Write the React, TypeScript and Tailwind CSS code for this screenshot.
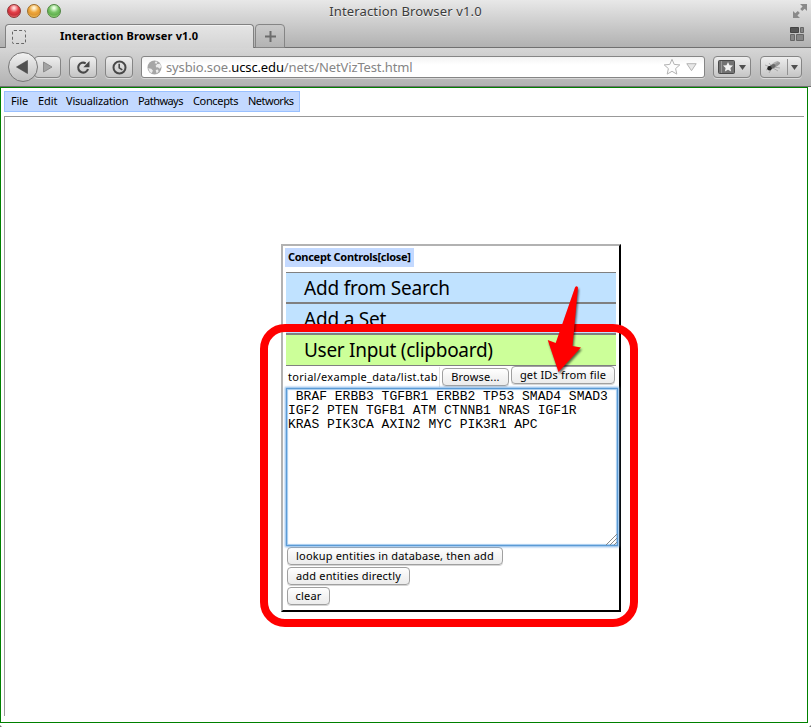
import type { ReactNode } from "react";

function TitleBar() {
  return (
    <div className="relative flex h-6 items-center justify-center pb-px">
      <div className="absolute left-[7px] top-[4px] flex gap-[6px]">
        <span className="size-[14px] rounded-full border border-[#8d3434] bg-[radial-gradient(circle_at_50%_25%,#ffd5d5_8%,#e5404a_42%,#c9303a_65%,#ff9595_100%)]" />
        <span className="size-[14px] rounded-full border border-[#a16d25] bg-[radial-gradient(circle_at_50%_25%,#fff3d2_8%,#efa83d_42%,#df9632_65%,#ffe37c_100%)]" />
        <span className="size-[14px] rounded-full border border-[#4e8541] bg-[radial-gradient(circle_at_50%_25%,#e9ffe0_8%,#79c468_42%,#62b04f_65%,#bdf39d_100%)]" />
      </div>
      <span className="text-[13px] tracking-[0.15px] text-[#3c3c3c] [text-shadow:0_1px_0_#f4f4f4]">Interaction Browser v1.0</span>
      <svg className="absolute right-[3px] top-[4px]" width="15" height="14" viewBox="0 0 15 14" fill="#8a8a8a">
        <path d="M7 0h7v7l-2.3-2.3-2.5 2.4-2-2 2.4-2.5zM0 14V7l2.3 2.3 2.5-2.4 2 2-2.4 2.5L7 14z" />
      </svg>
    </div>
  );
}

function TabStrip() {
  return (
    <div className="relative flex h-6 items-stretch">
      <div className="absolute inset-x-0 bottom-0 h-px bg-[#707070]" />
      <div className="relative ml-[5px] flex w-[249px] items-center rounded-t-[4px] border-x border-t border-[#818181] bg-linear-to-b from-[#e5e5e5] to-[#d4d4d4] pl-[6px] shadow-[inset_0_1px_0_#f2f2f2]">
        <span className="size-[14px] rounded-[2px] border border-dashed border-[#666]" />
        <span className="ml-[34px] whitespace-nowrap text-[11px] font-bold tracking-[0.15px] text-black">Interaction Browser v1.0</span>
      </div>
      <div className="relative ml-px flex w-[30px] items-center justify-center rounded-t-[4px] border border-[#858585] bg-linear-to-b from-[#cacaca] to-[#b3b3b3]">
        <svg width="11" height="11" viewBox="0 0 11 11" stroke="#6c6c6c" strokeWidth="2"><path d="M5.5 0v11M0 5.5h11" /></svg>
      </div>
      <svg className="absolute right-[7px] top-[3px]" width="14" height="14" viewBox="0 0 14 14">
        <path d="M.5.5h8v5h-8z" fill="#555" stroke="#444" />
        <path d="M10.5.5h3v5h-3zM.5 7.5h4v6h-4zM6.5 7.5h7v6h-7z" fill="#858585" stroke="#666" />
      </svg>
    </div>
  );
}

function ToolButton({ className, children }: { className: string; children: ReactNode }) {
  return (
    <div className={`flex h-[22px] items-center justify-center rounded-[4px] border border-[#858585] bg-linear-to-b from-[#eee] to-[#c5c5c5] shadow-[0_1px_0_#dadada] ${className}`}>
      {children}
    </div>
  );
}

function Toolbar() {
  return (
    <div className="flex h-[39px] items-center border-b border-[#707070] bg-linear-to-b from-[#d6d6d6] to-[#b2b2b2]">
      <div className="ml-2 flex items-center">
        <div className="z-10 flex size-[30px] items-center justify-center rounded-full border border-[#777] bg-linear-to-b from-[#f2f2f2] to-[#bebebe] pr-[3px]">
          <svg width="12" height="14" viewBox="0 0 12 14"><path d="M11.5 .5v13L.5 7z" fill="#505050" stroke="#444" strokeWidth=".6" /></svg>
        </div>
        <ToolButton className="-ml-[4px] w-[27px]">
          <svg width="10" height="12" viewBox="0 0 10 12"><path d="M.5 1v10L9 6z" fill="#a3a3a3" stroke="#8b8b8b" /></svg>
        </ToolButton>
      </div>
      <ToolButton className="ml-2 w-[28px]">
        <svg width="15" height="15" viewBox="0 0 15 15"><path d="M9.7 3.3A5 5 0 1 0 12 9" fill="none" stroke="#484848" strokeWidth="2.1" /><path d="M13.5 1v6.2H7.3z" fill="#484848" /></svg>
      </ToolButton>
      <ToolButton className="ml-2 w-[28px]">
        <svg width="15" height="15" viewBox="0 0 15 15" fill="none" stroke="#484848"><circle cx="7.5" cy="7.5" r="6" strokeWidth="2" /><path d="M7.2 3.8v4.1l3.1 2" strokeWidth="1.6" /></svg>
      </ToolButton>
      <div className="relative ml-2 flex h-[22px] w-[564px] items-center rounded-[3px] border border-[#858585] bg-linear-to-b from-[#f3f3f3] to-white to-40% pl-[5px] shadow-[0_1px_0_#d8d8d8]">
        <svg className="shrink-0" width="15" height="15" viewBox="0 0 15 15">
          <circle cx="7.5" cy="7.5" r="7" fill="#a6a6a6" />
          <path d="M8.5 1.5l2 .2-.8 2-2-.5zM10.2 4l3-.2 1 3-1.4 2-2-1.5-1.4.2-.8-1.7zM1.2 8.2l3 .5 1.7 1.8-1 2.6-2-.8zM8.7 10l2.3-.4.6 2-2 1.8z" fill="#ececec" />
        </svg>
        <span className="ml-[4px] mt-px whitespace-nowrap text-[13px] tracking-[-0.13px] text-[#858585]">
          sysbio.soe.<span className="text-black">ucsc.edu</span>/nets/NetVizTest.html
        </span>
        <svg className="absolute right-[23px] top-[1px]" width="18" height="18" viewBox="0 0 18 18"><path d="M9 1.3l2.2 5.1 5.6.5-4.2 3.7 1.2 5.5L9 13.3l-4.8 2.8 1.2-5.5L1.2 6.9l5.6-.5z" fill="#fdfdfd" stroke="#b3b3b3" /></svg>
        <svg className="absolute right-[7px] top-[6px]" width="11" height="9" viewBox="0 0 11 9"><path d="M.8.7h9.4l-4.7 7z" fill="#e8e8e8" stroke="#b3b3b3" /></svg>
      </div>
      <ToolButton className="ml-2 w-[38px] gap-[4px]">
        <svg width="17" height="14" viewBox="0 0 17 14"><rect x=".5" y=".5" width="16" height="13" rx="1" fill="#727272" stroke="#4a4a4a" /><path d="M3.5 1v12" stroke="#9a9a9a" /><path d="M10 2l1.5 3.2 3.5.4-2.6 2.4.7 3.5L10 9.8l-3.1 1.7.7-3.5L5 5.6l3.5-.4z" fill="#f2f2f2" /></svg>
        <svg width="7" height="5" viewBox="0 0 7 5"><path d="M0 0h7L3.5 5z" fill="#4f4f4f" /></svg>
      </ToolButton>
      <ToolButton className="ml-[9px] w-[42px]">
        <svg width="18" height="14" viewBox="0 0 18 14">
          <path d="M1 5l5 2M2 10l5-2M5 13l3-5M8 7L5 3M9 8l5 3M9 7l7 1" stroke="#969696" strokeWidth=".7" />
          <ellipse cx="11" cy="4" rx="4.5" ry="1.8" transform="rotate(-35 11 4)" fill="#b0b0b0" />
          <ellipse cx="13" cy="4.5" rx="3.6" ry="1.4" transform="rotate(-35 13 4.5)" fill="#969696" />
          <ellipse cx="8.5" cy="6.5" rx="3.2" ry="2" transform="rotate(-30 8.5 6.5)" fill="#6a6a6a" />
          <circle cx="5.5" cy="8.2" r="2.2" fill="#222" />
        </svg>
        <span className="ml-[5px] mr-[3px] h-4 w-px bg-[#929292]" />
        <svg width="7" height="5" viewBox="0 0 7 5"><path d="M0 0h7L3.5 5z" fill="#4f4f4f" /></svg>
      </ToolButton>
    </div>
  );
}

function PushButton({ className, children }: { className: string; children: ReactNode }) {
  return (
    <button className={`flex h-[18px] shrink-0 items-center justify-center whitespace-nowrap rounded-[4px] border border-[#a0a0a0] bg-linear-to-b from-white via-[#f4f4f4] via-50% to-[#ececec] text-[11px] tracking-[0.17px] text-black shadow-[0_1px_0_#d5d5d5] ${className}`}>
      {children}
    </button>
  );
}

function ConceptControls() {
  return (
    <section className="absolute left-[281px] top-[244px] h-[368px] w-[340px] border-2 border-b-black border-l-[#b2b2b2] border-r-black border-t-[#b2b2b2] bg-white">
      <div className="ml-[2px] mt-[2px] flex h-[19px] w-[129px] items-center whitespace-nowrap bg-[#c3d9ff] pl-[3px] text-[11px] font-bold tracking-[-0.29px]">
        Concept Controls[close]
      </div>
      <div className="ml-[3px] mt-[5px] w-[330px] text-[19px] leading-[29px]">
        <div className="h-[32px] border-b-2 border-t border-[#808080] bg-[#c0e2ff] pl-[18px] tracking-[-0.2px]">
          <div className="pt-[1px]">Add from Search</div>
        </div>
        <div className="h-[31px] border-b-2 border-[#808080] bg-[#c0e2ff] pl-[18px] tracking-[-0.2px]">
          <div className="pt-[1px]">Add a Set</div>
        </div>
        <div className="h-[31px] border-b border-[#808080] bg-[#ccff99] pl-[18px] tracking-[-0.28px]">
          <div className="pt-[1px]">User Input (clipboard)</div>
        </div>
      </div>
      <div className="flex h-[22px] pl-[3px] text-[11px]">
        <div className="mt-px flex h-[20px] w-[154px] items-center overflow-hidden whitespace-nowrap border-r border-[#e0e0e0] pl-[2px] tracking-[0.28px]">torial/example_data/list.tab</div>
        <PushButton className="ml-[2px] mt-[2px] w-[67px]">Browse...</PushButton>
        <PushButton className="ml-[2px] w-[104px]">get IDs from file</PushButton>
      </div>
      <div className="relative ml-[3px] h-[158px] w-[332px] whitespace-pre border border-[#5b9bd5] bg-white pl-px pt-[1px] font-['Liberation_Mono','Courier_New',monospace] text-[13px] leading-[14px] shadow-[0_0_2px_1px_#82b5e8,inset_0_0_1px_1px_#a3caef]">
        {" BRAF ERBB3 TGFBR1 ERBB2 TP53 SMAD4 SMAD3\nIGF2 PTEN TGFB1 ATM CTNNB1 NRAS IGF1R\nKRAS PIK3CA AXIN2 MYC PIK3R1 APC"}
        <svg className="absolute bottom-0 right-0" width="12" height="12" viewBox="0 0 12 12" stroke="#888"><path d="M1 12L12 1M5 12l7-7M9 12l3-3" /></svg>
      </div>
      <div className="ml-[4px] mt-[1px] flex flex-col gap-[2px]">
        <PushButton className="w-[216px]">lookup entities in database, then add</PushButton>
        <PushButton className="w-[123px]">add entities directly</PushButton>
        <PushButton className="w-[43px]">clear</PushButton>
      </div>
    </section>
  );
}

function Callout() {
  return (
    <>
      <div className="pointer-events-none absolute left-[260px] top-[324px] h-[303px] w-[378px] rounded-[25px] border-8 border-[#ff0000]" />
      <svg className="pointer-events-none absolute left-[540px] top-[280px] drop-shadow-[1px_2px_1px_rgba(0,0,0,0.6)]" width="50" height="100" viewBox="0 0 50 100">
        <path d="M35 7.5Q36.5 5 38 7.5L32.5 66l8.5 1.5L18.5 92 7.7 60l8 3z" fill="#ff0000" />
      </svg>
    </>
  );
}

export default function App() {
  return (
    <div className="relative flex h-[727px] w-[811px] flex-col overflow-hidden bg-white font-['Lucida_Grande','Noto_Sans','Open_Sans',sans-serif] text-black">
      <header>
        <div className="bg-linear-to-b from-[#e8e8e8] to-[#b0b0b0]">
          <TitleBar />
          <TabStrip />
        </div>
        <Toolbar />
      </header>
      <main className="h-[636px] w-[808px] border border-b-[1px] border-[#008000] pl-[3px] pt-[3px]">
        <nav className="flex h-[21px] w-[296px] items-center whitespace-nowrap border border-[#99c0ff] bg-[#c3d9ff] pl-[6px] text-[11px] tracking-[-0.1px]">
          <span className="w-[27px]">File</span>
          <span className="w-[28px]">Edit</span>
          <span className="w-[72px] tracking-[-0.2px]">Visualization</span>
          <span className="w-[55px] tracking-[-0.55px]">Pathways</span>
          <span className="w-[55px] tracking-[-0.35px]">Concepts</span>
          <span className="tracking-[-0.5px]">Networks</span>
        </nav>
        <div className="mt-[4px] h-[600px] w-[800px] border-l border-t border-[#999]" />
      </main>
      <ConceptControls />
      <Callout />
      <svg className="absolute bottom-0 left-0" width="2" height="2"><path d="M0 0v2h2z" fill="#777" /></svg>
      <svg className="absolute bottom-0 right-0" width="2" height="2"><path d="M2 0v2H0z" fill="#777" /></svg>
    </div>
  );
}
